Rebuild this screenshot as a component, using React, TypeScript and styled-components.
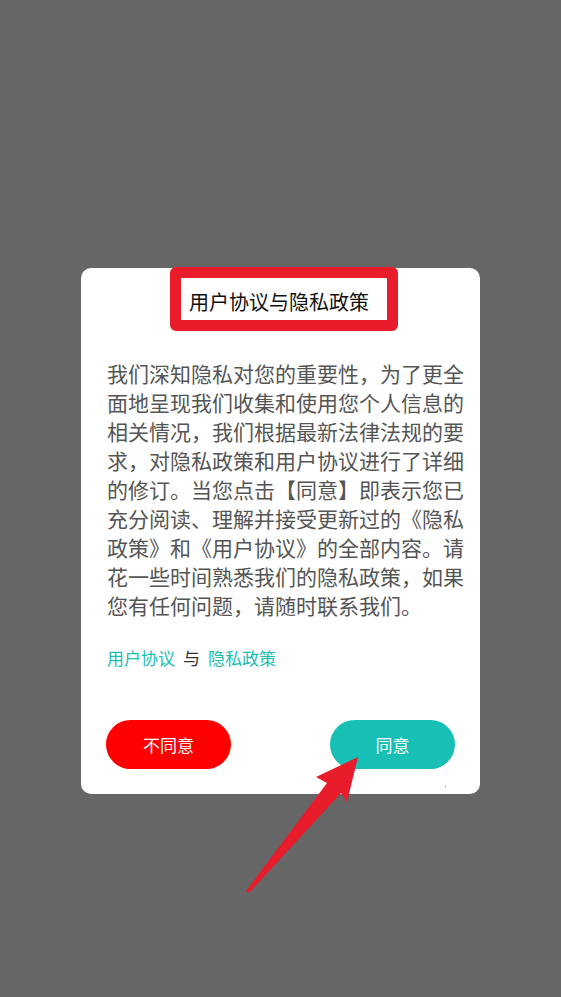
import styled, { createGlobalStyle } from "styled-components";

const GlobalStyle = createGlobalStyle`
  html, body {
    margin: 0;
    padding: 0;
    background: #666666;
  }
  body {
    font-family: "Noto Sans CJK SC", "Noto Sans", sans-serif;
  }
`;

const Overlay = styled.div`
  position: relative;
  width: 561px;
  height: 997px;
  box-sizing: border-box;
  padding-top: 268px;
  background: #666666;
  display: flex;
  flex-direction: column;
  align-items: center;
  overflow: hidden;
`;

const Dialog = styled.div`
  position: relative;
  width: 399px;
  height: 526px;
  box-sizing: border-box;
  padding: 0 16px 25px 26px;
  background: #ffffff;
  border-radius: 10px;
  display: flex;
  flex-direction: column;

  &::after {
    content: "";
    position: absolute;
    left: 364px;
    top: 518px;
    width: 1px;
    height: 1px;
    background: #888;
  }
`;

const Header = styled.div`
  display: flex;
  justify-content: center;
  margin-top: -1px;
  margin-left: -3px;
`;

const TitleBox = styled.div`
  box-sizing: border-box;
  width: 228px;
  height: 64px;
  border: 11px solid #e91c2b;
  border-radius: 6px;
  padding: 0 18px 0 8px;
  display: flex;
  align-items: center;
  justify-content: center;
`;

const Title = styled.h1`
  margin: 0;
  font-size: 20px;
  font-weight: 400;
  color: #111111;
  line-height: 1;
  padding-top: 6px;
  white-space: nowrap;
`;

const Body = styled.p`
  margin: 28px 0 0;
  width: 357px;
  font-size: 21px;
  line-height: 29px;
  color: #555555;
`;

const Links = styled.div`
  margin-top: 27px;
  display: flex;
  align-items: center;
  gap: 8px;
  font-size: 17px;
  line-height: 22px;
`;

const LinkText = styled.a`
  color: #1bbdb2;
  text-decoration: none;
`;

const Joiner = styled.span`
  color: #333333;
`;

const Actions = styled.div`
  margin-top: auto;
  display: flex;
  justify-content: space-between;
  padding-right: 9px;
  margin-left: -1px;
`;

const ActionButton = styled.button<{ $tone: "danger" | "primary" }>`
  width: 125px;
  height: 49px;
  border: none;
  border-radius: 25px;
  background: ${(p) => (p.$tone === "danger" ? "#ff0000" : "#17bfb4")};
  color: #ffffff;
  font-family: inherit;
  font-size: 17px;
  cursor: pointer;
`;

const Pointer = styled.svg`
  position: absolute;
  left: 0;
  top: 0;
  pointer-events: none;
`;

export default function App() {
  return (
    <>
      <GlobalStyle />
      <Overlay>
        <Dialog>
          <Header>
            <TitleBox>
              <Title>用户协议与隐私政策</Title>
            </TitleBox>
          </Header>
          <Body>
            我们深知隐私对您的重要性，为了更全面地呈现我们收集和使用您个人信息的相关情况，我们根据最新法律法规的要求，对隐私政策和用户协议进行了详细的修订。当您点击【同意】即表示您已充分阅读、理解并接受更新过的《隐私政策》和《用户协议》的全部内容。请花一些时间熟悉我们的隐私政策，如果您有任何问题，请随时联系我们。
          </Body>
          <Links>
            <LinkText>用户协议</LinkText>
            <Joiner>与</Joiner>
            <LinkText>隐私政策</LinkText>
          </Links>
          <Actions>
            <ActionButton $tone="danger">不同意</ActionButton>
            <ActionButton $tone="primary">同意</ActionButton>
          </Actions>
        </Dialog>
        <Pointer width="561" height="997" viewBox="0 0 561 997">
          <polygon
            points="358,757 347,802 341,793 249,893 246,891 327,783 316,777"
            fill="#e91c2b"
          />
        </Pointer>
      </Overlay>
    </>
  );
}
